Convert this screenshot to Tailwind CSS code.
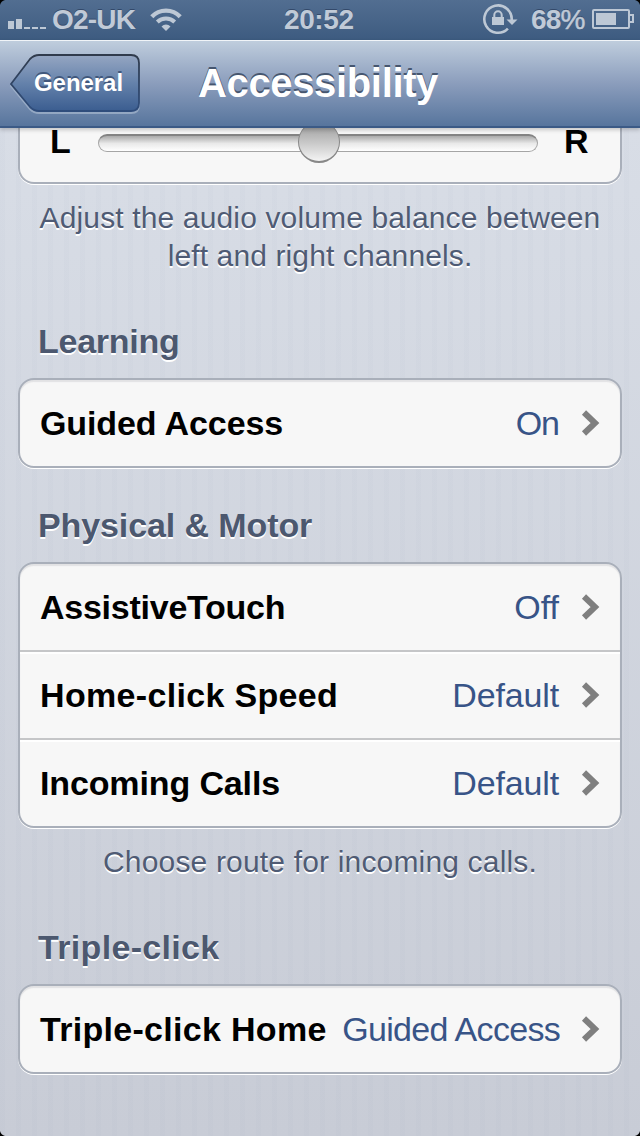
<!DOCTYPE html>
<html lang="en">
<head>
<meta charset="utf-8">
<title>Accessibility</title>
<script src="https://cdn.jsdelivr.net/npm/@tailwindcss/browser@4"></script>
</head>
<body class="bg-black">
<div class="relative w-[640px] h-[1136px] overflow-hidden flex flex-col bg-[#d0d5df] font-['Liberation_Sans',Arial,sans-serif] whitespace-nowrap">

  <!-- Status bar -->
  <header class="h-10 shrink-0 flex items-center bg-linear-to-b from-[#526e91] to-[#3d5b80] text-[#c0cad7] text-[28px] font-bold leading-10 [text-shadow:0_-1px_0_#33496a]">
    <svg class="w-[46px] h-10 ml-2 shrink-0" viewBox="0 0 46 40" fill="#bdc8d5"><path d="M0 21h6v8H0zM8 19h6v10H8zM16 27h6v2h-6zM24 27h6v2h-6zM32 27h6v2h-6z"/></svg>
    <span class="w-[97px] -ml-[2px] tracking-[-0.8px]">O2-UK</span>
    <svg class="w-9 h-10 shrink-0" viewBox="0 0 36 40" fill="none" stroke="#bdc8d5"><path d="M2.8 16.8a19.5 19.5 0 0 1 28.4 0" stroke-width="4.3"/><path d="M8.3 22a12.5 12.5 0 0 1 17.4 0" stroke-width="4"/><path d="M17 31l-4.5-4.6a6.5 6.5 0 0 1 9 0z" fill="#bdc8d5" stroke="none"/></svg>
    <span class="ml-[99px] w-[72px] tracking-[-0.4px]">20:52</span>
    <svg class="w-9 h-10 ml-[127px] shrink-0 overflow-visible" viewBox="0 0 36 40" fill="none" stroke="#bdc8d5" stroke-width="2.6"><path d="M24.9 28.6A13.7 13.7 0 1 1 28.7 20"/><path d="M23.5 19.5h11L29 25z" fill="#bdc8d5" stroke="none"/><path d="M9 17h12v8H9z" fill="#bdc8d5" stroke="none"/><path d="M11.3 18v-3a3.7 3.7 0 0 1 7.4 0v3" stroke-width="2"/></svg>
    <span class="ml-[12px] w-[61px] tracking-[-0.8px]">68<span class="font-normal [-webkit-text-stroke:0.5px_#c0cad7]">%</span></span>
    <svg class="w-[42px] h-10 shrink-0" viewBox="0 0 42 40" fill="none" stroke="#bdc8d5" stroke-width="2"><rect x="1" y="10" width="36" height="18" rx="1"/><path d="M38 15h3v7h-3"/><path d="M4 13h20v12H4z" fill="#bdc8d5" stroke="none"/></svg>
  </header>

  <!-- Navigation bar -->
  <nav class="relative z-10 h-[88px] shrink-0 flex items-center border-t border-b-2 border-t-[#f0f4f8] border-b-[#3b5a86] bg-linear-to-b from-[#bfcddd] via-[#8b9dbc] to-[#57759d] shadow-[0_2px_4px_rgba(0,0,0,0.2)]">
    <div class="grid w-[132px] h-[62px] ml-[10px] shrink-0">
      <svg class="col-start-1 row-start-1" width="132" height="62" viewBox="0 0 132 62">
        <defs>
          <linearGradient id="backFill" x1="0" y1="0" x2="0" y2="1"><stop offset="0" stop-color="#95a6c2"/><stop offset=".5" stop-color="#6582ab"/><stop offset="1" stop-color="#3b5d90"/></linearGradient>
          <linearGradient id="backEdge" x1="0" y1="0" x2="0" y2="1"><stop offset="0" stop-color="#303b4c"/><stop offset="1" stop-color="#2f4d7c"/></linearGradient>
        </defs>
        <path d="M1 33L20 8Q24 3 29 3H121Q129 3 129 11V52Q129 60 121 60H29Q24 60 20 56Z" fill="none" stroke="#a7b8cf" stroke-width="2" opacity=".7"/>
        <path d="M1 31L20 6Q24 2 29 2H121Q129 2 129 10V50Q129 58 121 58H29Q24 58 20 54Z" fill="url(#backFill)" stroke="url(#backEdge)" stroke-width="1.8"/>
      </svg>
      <span class="col-start-1 row-start-1 self-center pl-[24px] -mt-[2px] text-white text-[24px] leading-[60px] font-bold tracking-[-0.05px] [text-shadow:0_-2px_0_#41587c]">General</span>
    </div>
    <h1 class="ml-[56px] -mt-px text-white text-[40px] leading-[86px] font-bold tracking-[-0.35px] [text-shadow:0_-2px_0_#46566f]">Accessibility</h1>
  </nav>

  <!-- Settings list -->
  <main class="relative h-[1008px] shrink-0 px-[18px] bg-[repeating-linear-gradient(90deg,rgba(100,120,155,0.025)_0px,rgba(100,120,155,0.025)_5px,transparent_5px,transparent_16px),linear-gradient(180deg,#d8dde6,#c8ccd6)]">
    <section class="h-14 flex items-start border-2 border-t-0 border-[#a9afba] rounded-b-[16px] bg-[#f7f7f7] shadow-[0_1px_0_#fff] text-black text-[34px] font-bold">
      <span class="ml-[30px] w-[48px] leading-[26px]">L</span>
      <div class="relative mt-[6px] w-[440px] h-[18px] rounded-full border border-[#a5a5a5] border-t-2 border-t-[#838383] bg-linear-to-b from-[#aaa] via-[#e9e9e9] to-white">
        <div class="absolute left-[199px] -top-[15px] w-[42px] h-[42px] rounded-full border border-[#888] border-b-2 bg-linear-to-b from-[#999] to-[#f4f4f4]"></div>
      </div>
      <span class="ml-[26px] leading-[26px]">R</span>
    </section>
    <p class="mt-[15px] text-center text-[#4f5b74] text-[30px] leading-[38px] [text-shadow:0_2px_0_#fff]"><span class="tracking-[0.14px]">Adjust the audio volume balance between</span><br><span class="tracking-[0.12px]">left and right channels.</span></p>

    <h2 class="mt-[44px] pl-5 h-[44px] leading-[44px] text-[#4c586f] text-[34px] font-bold tracking-[-0.25px] [text-shadow:0_2px_0_#fff]">Learning</h2>
    <section class="mt-[15px] border-2 border-[#a9afba] rounded-[16px] bg-[#f7f7f7] shadow-[0_1px_0_#fff,inset_0_2px_1px_#e2e2e4]">
      <div class="h-[86px] flex items-center justify-between px-5 text-[34px]">
        <span class="font-bold text-black tracking-[-0.1px]">Guided Access</span>
        <div class="flex items-center gap-[22px] text-[#385487]"><span class="tracking-[-1px]">On</span><svg width="19" height="26" viewBox="0 0 19 26" fill="none" stroke="#7f7f7f" stroke-width="6"><path d="M3 2.5L14 13L3 23.5"/></svg></div>
      </div>
    </section>

    <h2 class="mt-[35px] pl-5 h-[44px] leading-[44px] text-[#4c586f] text-[34px] font-bold tracking-[-0.1px] [text-shadow:0_2px_0_#fff]">Physical &amp; Motor</h2>
    <section class="mt-[15px] border-2 border-[#a9afba] rounded-[16px] bg-[#f7f7f7] shadow-[0_1px_0_#fff,inset_0_2px_1px_#e2e2e4]">
      <div class="h-[86px] flex items-center justify-between px-5 text-[34px]">
        <span class="font-bold text-black tracking-[-0.25px]">AssistiveTouch</span>
        <div class="flex items-center gap-[22px] text-[#385487]"><span>Off</span><svg width="19" height="26" viewBox="0 0 19 26" fill="none" stroke="#7f7f7f" stroke-width="6"><path d="M3 2.5L14 13L3 23.5"/></svg></div>
      </div>
      <div class="h-[88px] flex items-center justify-between px-5 text-[34px] border-t-2 border-[#c5c6c8] shadow-[inset_0_2px_0_#fff]">
        <span class="font-bold text-black tracking-[0.33px]">Home-click Speed</span>
        <div class="flex items-center gap-[22px] text-[#385487]"><span class="tracking-[-0.15px]">Default</span><svg width="19" height="26" viewBox="0 0 19 26" fill="none" stroke="#7f7f7f" stroke-width="6"><path d="M3 2.5L14 13L3 23.5"/></svg></div>
      </div>
      <div class="h-[88px] flex items-center justify-between px-5 text-[34px] border-t-2 border-[#c5c6c8] shadow-[inset_0_2px_0_#fff]">
        <span class="font-bold text-black tracking-[-0.13px]">Incoming Calls</span>
        <div class="flex items-center gap-[22px] text-[#385487]"><span class="tracking-[-0.15px]">Default</span><svg width="19" height="26" viewBox="0 0 19 26" fill="none" stroke="#7f7f7f" stroke-width="6"><path d="M3 2.5L14 13L3 23.5"/></svg></div>
      </div>
    </section>
    <p class="mt-[15px] text-center text-[#4f5b74] text-[30px] leading-[38px] tracking-[0.17px] [text-shadow:0_2px_0_#fff]">Choose route for incoming calls.</p>

    <h2 class="mt-[44px] pl-5 h-[44px] leading-[44px] text-[#4c586f] text-[34px] font-bold tracking-[0.33px] [text-shadow:0_2px_0_#fff]">Triple-click</h2>
    <section class="mt-[15px] border-2 border-[#a9afba] rounded-[16px] bg-[#f7f7f7] shadow-[0_1px_0_#fff,inset_0_2px_1px_#e2e2e4]">
      <div class="h-[86px] flex items-center justify-between px-5 text-[34px]">
        <span class="font-bold text-black tracking-[0.3px]">Triple-click Home</span>
        <div class="flex items-center gap-[21px] text-[#385487]"><span class="tracking-[-0.7px]">Guided Access</span><svg width="19" height="26" viewBox="0 0 19 26" fill="none" stroke="#7f7f7f" stroke-width="6"><path d="M3 2.5L14 13L3 23.5"/></svg></div>
      </div>
    </section>
  </main>

  <!-- Rounded screen corners -->
  <svg class="absolute inset-0 z-20" width="640" height="1136" viewBox="0 0 640 1136"><path d="M0 0h5Q1 1 0 5zM640 0h-5q4 1 5 5zM0 1136h5q-4-1-5-5zM640 1136h-5q4-1 5-5z" fill="#000"/></svg>
</div>
</body>
</html>
